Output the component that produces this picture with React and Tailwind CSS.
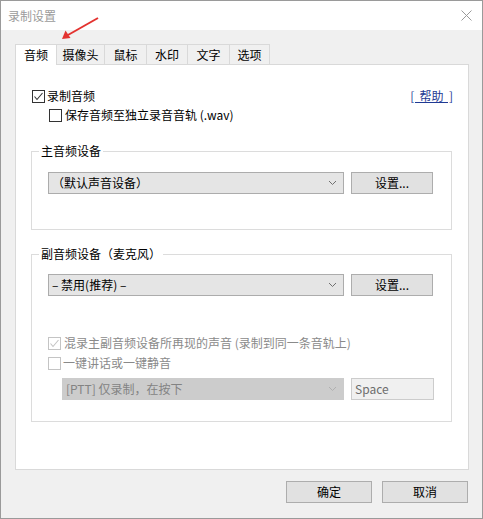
import React from "react";

const font = { fontFamily: '"Noto Sans CJK SC", "Noto Sans", sans-serif' };

function CheckBox({ checked, disabled }) {
  const color = disabled ? "#c4c4c4" : "#333333";
  return (
    <span
      className={`w-[13px] h-[13px] border flex items-center justify-center bg-white shrink-0 ${
        disabled ? "border-[#c4c4c4]" : "border-[#333333]"
      }`}
    >
      {checked && (
        <svg width="11" height="11" viewBox="0 0 11 11">
          <path d="M1.5 5.5 L4 8.5 L9.5 2" fill="none" stroke={color} strokeWidth="1.1" />
        </svg>
      )}
    </span>
  );
}

function Chevron({ color }) {
  return (
    <svg width="9" height="6" viewBox="0 0 9 6">
      <path d="M1 1 L4.5 4.5 L8 1" fill="none" stroke={color} strokeWidth="1" />
    </svg>
  );
}

function Combo({ text, width, disabled }) {
  return (
    <div
      className={`h-[22px] flex items-center justify-between border pl-[3px] pr-[6px] ${width} ${
        disabled
          ? "bg-[#cccccc] border-[#cccccc] text-[#838383]"
          : "bg-[#e5e5e5] border-[#acacac] text-[#000000]"
      }`}
    >
      <span>{text}</span>
      <Chevron color={disabled ? "#b0b0b0" : "#707070"} />
    </div>
  );
}

function Btn({ label, width }) {
  return (
    <div
      className={`h-[22px] ${width} bg-[#e1e1e1] border border-[#adadad] flex items-center justify-center`}
    >
      {label}
    </div>
  );
}

const tabs = [
  { label: "摄像头", w: "w-[48px]" },
  { label: "鼠标", w: "w-[42px]" },
  { label: "水印", w: "w-[41px]" },
  { label: "文字", w: "w-[42px]" },
  { label: "选项", w: "w-[40px]" },
];

export default function App() {
  return (
    <div
      className="relative w-[483px] h-[519px] border border-[#9a9a9a] bg-[#f0f0f0] text-[12px] leading-[16px] text-black flex flex-col"
      style={font}
    >
      {/* title bar */}
      <div className="h-[29px] bg-white flex items-center justify-between pl-[7px] pr-[10px] shrink-0">
        <span className="text-[#9b9b9b]">录制设置</span>
        <svg width="11" height="11" viewBox="0 0 11 11">
          <path d="M0.5 0.5 L10.5 10.5 M10.5 0.5 L0.5 10.5" stroke="#9a9a9a" strokeWidth="1" />
        </svg>
      </div>

      {/* tabs */}
      <div className="mt-[13px] ml-[14px] flex items-end h-[21px]">
        <div className="h-[21px] w-[42px] bg-white border border-b-0 border-[#d9d9d9] flex items-center justify-center relative z-10 -mb-px pb-[1px] whitespace-nowrap">
          音频
        </div>
        {tabs.map((t) => (
          <div
            key={t.label}
            className={`h-[20px] ${t.w} border border-l-0 border-b-0 border-[#d9d9d9] flex items-center justify-center bg-[#f0f0f0] whitespace-nowrap`}
          >
            {t.label}
          </div>
        ))}
      </div>

      {/* tab panel */}
      <div className="ml-[14px] mr-[13px] h-[406px] bg-white border border-[#d9d9d9] flex flex-col">
        <div className="mt-[23px] h-[16px] flex items-center justify-between pl-[16px] pr-[15px]">
          <div className="flex items-center gap-[2px]">
            <CheckBox checked />
            <span>录制音频</span>
          </div>
          <span className="text-[#1f3a93] underline whitespace-pre">[  帮助  ]</span>
        </div>
        <div className="mt-[3px] h-[16px] flex items-center gap-[3px] pl-[33px]">
          <CheckBox />
          <span>保存音频至独立录音音轨 (.wav)</span>
        </div>

        <fieldset className="mt-[20px] ml-[15px] mr-[16px] border border-[#dcdcdc] pb-[35px]">
          <legend className="ml-[7px] px-[2px]">主音频设备</legend>
          <div className="mt-[13px] ml-[16px] flex gap-[7px]">
            <Combo text="（默认声音设备）" width="w-[296px]" />
            <Btn label="设置..." width="w-[82px]" />
          </div>
        </fieldset>

        <fieldset className="mt-[16px] ml-[15px] mr-[16px] border border-[#dcdcdc] pb-[21px]">
          <legend className="ml-[7px] px-[2px]">副音频设备（麦克风）</legend>
          <div className="mt-[12px] ml-[16px] flex gap-[7px]">
            <Combo text="– 禁用(推荐) –" width="w-[296px]" />
            <Btn label="设置..." width="w-[82px]" />
          </div>
          <div className="mt-[39px] ml-[16px] h-[16px] flex items-center gap-[3px] text-[#8a8a8a]">
            <CheckBox checked disabled />
            <span>混录主副音频设备所再现的声音 (录制到同一条音轨上)</span>
          </div>
          <div className="mt-[4px] ml-[16px] h-[16px] flex items-center gap-[2px] text-[#8a8a8a]">
            <CheckBox disabled />
            <span>一键讲话或一键静音</span>
          </div>
          <div className="mt-[7px] ml-[30px] flex gap-[7px]">
            <Combo text="[PTT] 仅录制，在按下" width="w-[282px]" disabled />
            <div className="h-[22px] w-[83px] bg-[#f0f0f0] border border-[#cccccc] text-[#6d6d6d] flex items-center pl-[3px]">
              Space
            </div>
          </div>
        </fieldset>
      </div>

      {/* bottom buttons */}
      <div className="mt-[11px] flex justify-end gap-[10px] pr-[14px]">
        <Btn label="确定" width="w-[86px]" />
        <Btn label="取消" width="w-[86px]" />
      </div>

      {/* red annotation arrow */}
      <svg className="absolute left-[55px] top-[12px] pointer-events-none" width="50" height="32" viewBox="0 0 50 32">
        <path d="M42 5 L12 22" stroke="#e3322f" strokeWidth="2" />
        <path d="M6 26 L9.5 17.5 L14.5 25 Z" fill="#e3322f" />
      </svg>
    </div>
  );
}
